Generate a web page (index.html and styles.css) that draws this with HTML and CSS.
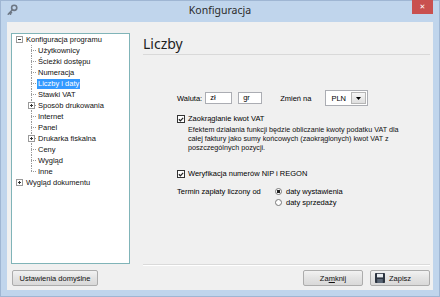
FILE: index.html
```html
<!DOCTYPE html>
<html lang="pl">
<head>
<meta charset="utf-8">
<title>Konfiguracja</title>
<link rel="stylesheet" href="styles.css">
</head>
<body>
<div class="window">
  <div class="titlebar">
    <svg class="app-icon" width="11" height="12" viewBox="0 0 11 12">
      <circle cx="7.2" cy="3.8" r="2.6" fill="none" stroke="#6d7784" stroke-width="1.6"/>
      <path d="M5.4 5.8 L1.2 10.2 M2.4 8.9 L3.6 10.1 M3.6 7.7 L4.6 8.7" stroke="#6d7784" stroke-width="1.5" fill="none" stroke-linecap="round"/>
    </svg>
    <div class="title">Konfiguracja</div>
    <div class="close">✕</div>
  </div>
  <div class="client">
    <div class="sidebar">
      <div class="tree">
        <div class="node root"><span class="exp minus"></span><span class="label">Konfiguracja programu</span></div>
        <div class="node child"><span class="conn"></span><span class="label">Użytkownicy</span></div>
        <div class="node child"><span class="conn"></span><span class="label">Ścieżki dostępu</span></div>
        <div class="node child"><span class="conn"></span><span class="label">Numeracja</span></div>
        <div class="node child"><span class="conn"></span><span class="label selected">Liczby i daty</span></div>
        <div class="node child"><span class="conn"></span><span class="label">Stawki VAT</span></div>
        <div class="node child"><span class="conn"><span class="exp plus"></span></span><span class="label">Sposób drukowania</span></div>
        <div class="node child"><span class="conn"></span><span class="label">Internet</span></div>
        <div class="node child"><span class="conn"></span><span class="label">Panel</span></div>
        <div class="node child"><span class="conn"><span class="exp plus"></span></span><span class="label">Drukarka fiskalna</span></div>
        <div class="node child"><span class="conn"></span><span class="label">Ceny</span></div>
        <div class="node child"><span class="conn"></span><span class="label">Wygląd</span></div>
        <div class="node child last"><span class="conn"></span><span class="label">Inne</span></div>
        <div class="node root"><span class="exp plus"></span><span class="label">Wygląd dokumentu</span></div>
      </div>
      <button class="btn btn-defaults">Ustawienia domyślne</button>
    </div>
    <div class="main">
      <h1 class="heading">Liczby</h1>
      <div class="content">
        <div class="currency-row">
          <span class="lbl-waluta">Waluta:</span>
          <span class="input in-zl">zł</span>
          <span class="input in-gr">gr</span>
          <span class="lbl-zmien">Zmień na</span>
          <span class="select"><span class="select-val">PLN</span><span class="select-btn"><svg width="5" height="3" viewBox="0 0 5 3"><path d="M0 0 H5 L2.5 3 Z" fill="#000"/></svg></span></span>
        </div>
        <div class="check-row first-check">
          <span class="checkbox"><svg width="7" height="7" viewBox="0 0 7 7"><path d="M1 3.2 L2.8 5 L6 1.5" stroke="#222" stroke-width="1.4" fill="none"/></svg></span>
          <div class="check-text">
            <div class="check-label">Zaokrąglanie kwot VAT</div>
            <div class="desc">Efektem działania funkcji będzie obliczanie kwoty podatku VAT dla<br>całej faktury jako sumy końcowych (zaokrąglonych) kwot VAT z<br>poszczególnych pozycji.</div>
          </div>
        </div>
        <div class="check-row second-check">
          <span class="checkbox"><svg width="7" height="7" viewBox="0 0 7 7"><path d="M1 3.2 L2.8 5 L6 1.5" stroke="#222" stroke-width="1.4" fill="none"/></svg></span>
          <div class="check-label">Weryfikacja numerów NIP i REGON</div>
        </div>
        <div class="term-row">
          <span class="term-label">Termin zapłaty liczony od</span>
          <div class="radios">
            <div class="radio-row"><span class="radio checked"></span><span>daty wystawienia</span></div>
            <div class="radio-row"><span class="radio"></span><span>daty sprzedaży</span></div>
          </div>
        </div>
      </div>
      <div class="footer">
        <button class="btn btn-close">Za<u>m</u>knij</button>
        <button class="btn btn-save"><svg class="save-icon" width="10" height="10" viewBox="0 0 10 10"><rect x="0" y="0" width="10" height="10" rx="0.8" fill="#2c3440"/><rect x="2" y="0.8" width="6" height="3.6" fill="#e8ecf0"/><rect x="2.2" y="6" width="5.6" height="4" fill="#5a6676"/></svg><span>Zapisz</span></button>
      </div>
    </div>
  </div>
</div>
</body>
</html>
```
FILE: styles.css
```css
* { box-sizing: border-box; }
html, body { margin: 0; padding: 0; }
body {
  width: 440px;
  height: 297px;
  overflow: hidden;
  font-family: "Liberation Sans", Arial, sans-serif;
  font-size: 7.5px;
  color: #000;
}
.window {
  width: 440px;
  height: 297px;
  background: #c0d5ec;
  border: 1px solid #9fb6d3;
  display: flex;
  flex-direction: column;
  padding: 0 6px 6px 6px;
}
.titlebar {
  height: 21px;
  display: grid;
  grid-template-columns: 1fr auto 1fr;
  align-items: start;
}
.app-icon { margin-top: 3px; }
.title {
  font-family: "Noto Sans", "Open Sans", sans-serif;
  font-size: 10.5px;
  color: #2b2b2b;
  line-height: 19px;
}
.close {
  justify-self: end;
  width: 21px;
  height: 14px;
  margin-top: -1px;
  background: #c9504f;
  color: #fff;
  font-size: 7px;
  font-weight: bold;
  line-height: 14px;
  text-align: center;
  font-family: "DejaVu Sans", sans-serif;
}
.client {
  flex: 1;
  background: #f0f0f0;
  display: flex;
  padding: 11px 3px 4px 4px;
}
.sidebar {
  width: 119px;
  display: flex;
  flex-direction: column;
}
.tree {
  flex: 1;
  background: #fff;
  border: 1px solid #80b4b8;
}
.node {
  display: flex;
  align-items: center;
  height: 11px;
  white-space: nowrap;
}
.node.root { padding-left: 4px; }
.node.root .exp { margin-right: 1px; }
.node.child { padding-left: 16px; }
.exp {
  display: inline-block;
  width: 7px;
  height: 7px;
  border: 1px solid #9a9a9a;
  background: #fff linear-gradient(#333, #333) center / 3px 1px no-repeat;
  flex: none;
}
.exp.plus {
  background:
    linear-gradient(#333, #333) center / 3px 1px no-repeat,
    linear-gradient(#333, #333) center / 1px 3px no-repeat,
    #fff;
}
.conn {
  width: 8px;
  height: 11px;
  flex: none;
  display: flex;
  align-items: center;
  background:
    repeating-linear-gradient(to bottom, #9a9a9a 0 1px, transparent 1px 2px) 3px 0 / 1px 100% no-repeat,
    repeating-linear-gradient(to right, #9a9a9a 0 1px, transparent 1px 2px) 3px 5px / 5px 1px no-repeat;
}
.node.last .conn {
  background:
    repeating-linear-gradient(to bottom, #9a9a9a 0 1px, transparent 1px 2px) 3px 0 / 1px 6px no-repeat,
    repeating-linear-gradient(to right, #9a9a9a 0 1px, transparent 1px 2px) 3px 5px / 5px 1px no-repeat;
}
.conn .exp { margin-left: 0; }
.label {
  margin-left: 1px;
  padding: 0 1px;
  line-height: 10px;
  color: #111;
}
.label.selected {
  background: #3399ff;
  color: #fff;
}
.btn {
  font-family: "Liberation Sans", Arial, sans-serif;
  font-size: 7.5px;
  color: #111;
  height: 16px;
  border: 1px solid #acacac;
  border-radius: 2px;
  background: linear-gradient(#f2f2f2, #e3e3e3 50%, #d9d9d9);
  padding: 0;
  display: flex;
  align-items: center;
  justify-content: center;
}
.btn-defaults {
  margin-top: 6px;
  margin-left: 1px;
  width: 86px;
}
.main {
  flex: 1;
  margin-left: 13px;
  display: flex;
  flex-direction: column;
}
.heading {
  margin: 2px 0 0 0;
  font-family: "Noto Sans", "Open Sans", sans-serif;
  font-weight: normal;
  font-size: 14px;
  line-height: 17px;
  color: #1e1e1e;
  padding-bottom: 2px;
  border-bottom: 1px solid #d9d9d9;
}
.content {
  flex: 1;
  padding-left: 34px;
  padding-top: 35px;
}
.currency-row {
  display: flex;
  align-items: center;
  height: 16px;
}
.input {
  height: 12px;
  border: 1px solid #abadb3;
  background: #fff;
  padding-left: 4px;
  line-height: 10px;
}
.in-zl { width: 27px; margin-left: 3px; }
.in-gr { width: 24px; margin-left: 6px; }
.lbl-zmien { margin-left: 18px; }
.select {
  margin-left: 14px;
  width: 43px;
  height: 16px;
  border: 1px solid #abadb3;
  background: #fff;
  display: flex;
  align-items: center;
  padding: 1px;
}
.select-val { flex: 1; padding-left: 4px; }
.select-btn {
  width: 15px;
  height: 12px;
  border: 1px solid #b5b5b5;
  background: linear-gradient(#f6f6f6, #dedede);
  display: flex;
  align-items: center;
  justify-content: center;
}
.check-row {
  display: flex;
  align-items: flex-start;
}
.first-check { margin-top: 8px; }
.second-check { margin-top: 17px; }
.checkbox {
  width: 8px;
  height: 8px;
  border: 1px solid #333;
  background: #fff;
  margin-top: 1px;
  margin-right: 3px;
  display: flex;
  align-items: center;
  justify-content: center;
  flex: none;
}
.check-label { line-height: 10px; }
.desc {
  font-size: 7.2px;
  line-height: 9px;
  white-space: nowrap;
  color: #111;
  margin-top: 1px;
}
.term-row {
  display: flex;
  margin-top: 7px;
}
.term-label { width: 98px; line-height: 11px; }
.radio-row {
  display: flex;
  align-items: center;
  height: 11px;
}
.radio {
  width: 7px;
  height: 7px;
  border: 1px solid #777;
  border-radius: 50%;
  background: #fff;
  margin-right: 4px;
}
.radio.checked {
  background: radial-gradient(circle, #222 0 1.5px, #fff 2px);
}
.footer {
  border-top: 1px solid #dadada;
  box-shadow: inset 0 1px 0 #fff;
  display: flex;
  justify-content: flex-end;
  gap: 7px;
  padding-top: 5px;
}
.btn-close, .btn-save { width: 60px; }
.btn-save { justify-content: flex-start; padding-left: 4px; }
.save-icon { margin-right: 4px; }
```
